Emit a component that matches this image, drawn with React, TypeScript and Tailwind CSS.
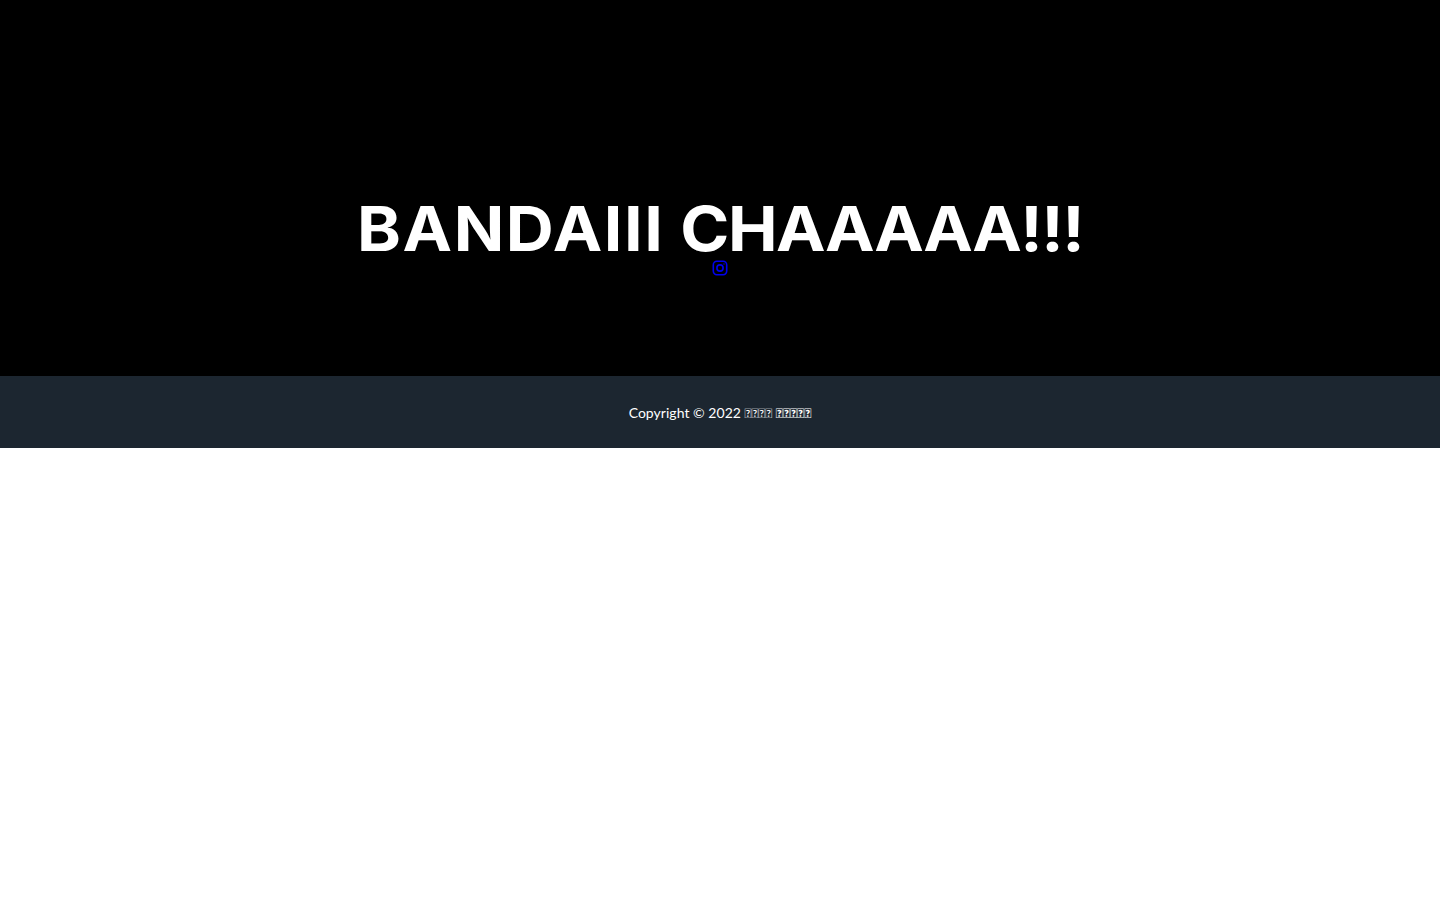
export default function App() {
  return (
    <div className="font-['Lato',sans-serif]">
      <section className="flex h-[376px] flex-col items-center bg-black pt-[190px]">
        <h1 className="scale-x-[1.071] whitespace-nowrap font-['Inter',sans-serif] text-[62px] leading-[77px] font-bold text-white">
          <span className="tracking-[1.5px]">BANDAIII</span> <span className="tracking-[-1.4px]">CHAAAAA!!!</span>
        </h1>
        <a href="#" className="mt-[-7px] block h-4 w-4 text-[#0000ee]">
          <svg viewBox="0 0 16 16" width="16" height="16" fill="none" stroke="currentColor" strokeWidth="1.6">
            <rect x="1.3" y="1.3" width="13.4" height="13.4" rx="3.6" />
            <circle cx="8" cy="8" r="3.1" />
            <circle cx="12" cy="4" r="0.7" fill="currentColor" stroke="none" />
          </svg>
        </a>
      </section>
      <footer className="flex h-[72px] items-center justify-center bg-[#1c2630] pt-px text-[14px] text-white">
        <span>
          <span className="tracking-[0.03px]">Copyright © 2022</span> <span className="text-[13px]">{"\uE000\uE001\uE002\uE003"}</span>{" "}
          <span className="text-[13px] font-bold">{"\uE000\uE001\uE002\uE003\uE004"}</span>
        </span>
      </footer>
    </div>
  );
}
